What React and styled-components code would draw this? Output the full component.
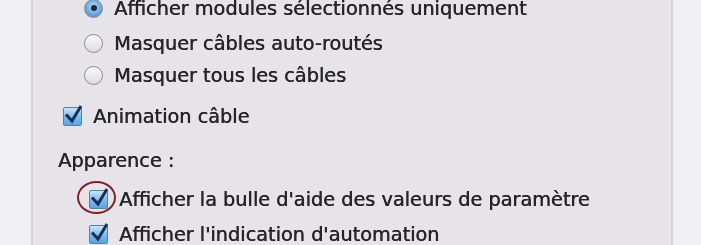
import React from 'react'
import styled, { createGlobalStyle } from 'styled-components'

const Global = createGlobalStyle`
  html, body {
    margin: 0;
    padding: 0;
    background: #efeef1;
  }
  body {
    width: 701px;
    height: 245px;
    overflow: hidden;
    font-family: "DejaVu Sans", "Liberation Sans", sans-serif;
  }
`

const Window = styled.div`
  display: flex;
  width: 701px;
  height: 245px;
  overflow: hidden;
  filter: blur(0.45px);
`

const Side = styled.div`
  width: ${({ width }) => width}px;
  flex: none;
  background: #f0eff2;
`

const Panel = styled.div`
  flex: 1;
  background: #e6e4e8;
  border-left: 2px solid #d4d2d7;
  border-right: 2px solid #d4d2d7;
  overflow: hidden;
`

const List = styled.div`
  display: flex;
  flex-direction: column;
  margin-top: -9px;
`

const Row = styled.div`
  position: relative;
  display: flex;
  align-items: center;
  height: ${({ h }) => h || 32}px;
  padding-left: ${({ indent }) => indent}px;
  gap: ${({ gap }) => gap ?? 11}px;
  font-size: 19.3px;
  color: #262528;
  white-space: nowrap;
`

const Label = styled.span`
  text-shadow: 0.5px 0 0 #262528;
`

const Radio = styled.span`
  width: 17px;
  height: 17px;
  flex: none;
  border-radius: 50%;
  border: 1px solid #8d8c92;
  background: ${({ on }) =>
    on
      ? 'radial-gradient(circle at 50% 40%, #b9dcf5 0%, #6aa9de 55%, #3f7fc0 100%)'
      : 'linear-gradient(#fbfbfc, #dcdbe0)'};
  display: flex;
  align-items: center;
  justify-content: center;
  &::after {
    content: '';
    display: ${({ on }) => (on ? 'block' : 'none')};
    width: 6px;
    height: 6px;
    border-radius: 50%;
    background: #1a2a44;
  }
`

const Box = styled.span`
  width: 17px;
  height: 17px;
  flex: none;
  border: 1px solid #5d7ea3;
  border-radius: 2px;
  background: linear-gradient(#c9e6fb 0%, #7fbdee 50%, #5aa4e3 100%);
  display: flex;
  align-items: center;
  justify-content: center;
`

const Mark = styled.svg`
  width: 19px;
  height: 19px;
  margin-top: -4px;
  margin-left: 2px;
  flex: none;
`

const Ring = styled.span`
  position: absolute;
  left: ${({ x }) => x}px;
  top: 50%;
  width: 35px;
  height: 29px;
  margin-top: -18px;
  border: 2px solid #7e1f2c;
  border-radius: 50%;
`

const Check = () => (
  <Box>
    <Mark viewBox="0 0 19 19">
      <path d="M2 9.5 L8 16 L17 1" fill="none" stroke="#1d2d55" strokeWidth="3" />
    </Mark>
  </Box>
)

export default function App() {
  return (
    <>
      <Global />
      <Window>
        <Side width={31} />
        <Panel>
          <List>
            <Row indent={51} h={34}>
              <Radio on />
              <Label>Afficher modules sélectionnés uniquement</Label>
            </Row>
            <Row indent={51} h={36}>
              <Radio />
              <Label>Masquer câbles auto-routés</Label>
            </Row>
            <Row indent={51} h={28}>
              <Radio />
              <Label>Masquer tous les câbles</Label>
            </Row>
            <Row indent={30} h={54}>
              <Check />
              <Label>Animation câble</Label>
            </Row>
            <Row indent={25} h={34}>
              <Label>Apparence :</Label>
            </Row>
            <Row indent={56} h={44}>
              <Ring x={44} />
              <Check />
              <Label>Afficher la bulle d'aide des valeurs de paramètre</Label>
            </Row>
            <Row indent={56} h={26}>
              <Check />
              <Label>Afficher l'indication d'automation</Label>
            </Row>
          </List>
        </Panel>
        <Side width={28} />
      </Window>
    </>
  )
}
